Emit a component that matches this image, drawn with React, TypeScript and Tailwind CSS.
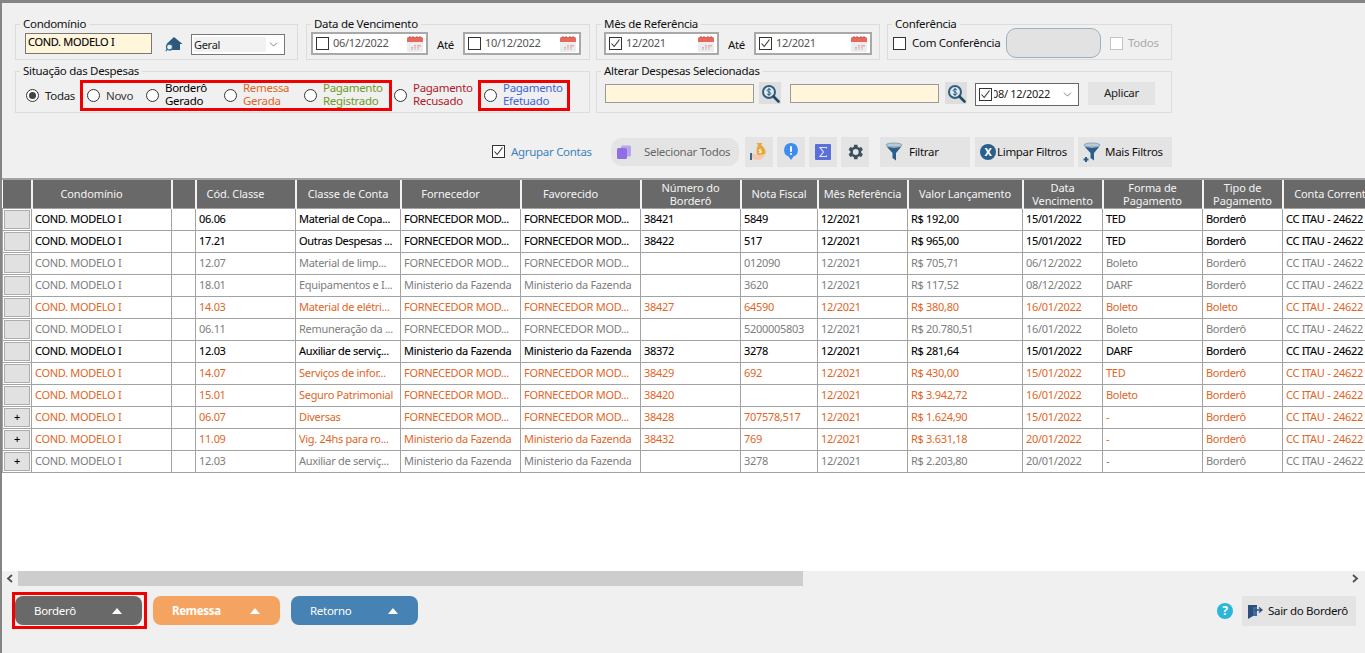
import React from "react";
import { ChevronDown } from "lucide-react";

type Tone = "k" | "g" | "o";
const FN = "FORNECEDOR MOD...";
const MF = "Ministerio da Fazenda";
const rows: { t: Tone; p?: boolean; c: string[] }[] = [
  { t: "k", c: ["06.06", "Material de Copa...", FN, FN, "38421", "5849", "R$ 192,00", "15/01/2022", "TED", "Borderô"] },
  { t: "k", c: ["17.21", "Outras Despesas ...", FN, FN, "38422", "517", "R$ 965,00", "15/01/2022", "TED", "Borderô"] },
  { t: "g", c: ["12.07", "Material de limp...", FN, FN, "", "012090", "R$ 705,71", "06/12/2022", "Boleto", "Borderô"] },
  { t: "g", c: ["18.01", "Equipamentos e I...", MF, MF, "", "3620", "R$ 117,52", "08/12/2022", "DARF", "Borderô"] },
  { t: "o", c: ["14.03", "Material de elétri...", FN, FN, "38427", "64590", "R$ 380,80", "16/01/2022", "Boleto", "Boleto"] },
  { t: "g", c: ["06.11", "Remuneração da ...", FN, FN, "", "5200005803", "R$ 20.780,51", "16/01/2022", "Boleto", "Borderô"] },
  { t: "k", c: ["12.03", "Auxiliar de serviç...", MF, MF, "38372", "3278", "R$ 281,64", "15/01/2022", "DARF", "Borderô"] },
  { t: "o", c: ["14.07", "Serviços de infor...", FN, FN, "38429", "692", "R$ 430,00", "15/01/2022", "TED", "Borderô"] },
  { t: "o", c: ["15.01", "Seguro Patrimonial", FN, FN, "38420", "", "R$ 3.942,72", "16/01/2022", "Boleto", "Borderô"] },
  { t: "o", p: true, c: ["06.07", "Diversas", FN, FN, "38428", "707578,517", "R$ 1.624,90", "15/01/2022", "-", "Borderô"] },
  { t: "o", p: true, c: ["11.09", "Vig. 24hs para ro...", MF, MF, "38432", "769", "R$ 3.631,18", "20/01/2022", "-", "Borderô"] },
  { t: "g", p: true, c: ["12.03", "Auxiliar de serviç...", MF, MF, "", "3278", "R$ 2.203,80", "20/01/2022", "-", "Borderô"] },
];
const toneClass: Record<Tone, string> = {
  k: "text-black [-webkit-text-stroke:0.1px_black]",
  g: "text-[#7d7d7d]",
  o: "text-[#e0661f]",
};
const widths = [29, 140, 24, 100, 105, 120, 120, 100, 77, 90, 115, 80, 100, 80, 100];
const headers: [string, string?, boolean?][] = [
  [""], ["Condomínio", undefined, true], [""], ["Cód. Classe", undefined, true], ["Classe de Conta"], ["Fornecedor", undefined, true], ["Favorecido", undefined, true],
  ["Número do", "Borderô"], ["Nota Fiscal"], ["Mês Referência"], ["Valor Lançamento"], ["Data", "Vencimento"],
  ["Forma de", "Pagamento"], ["Tipo de", "Pagamento"], ["Conta Corrente"],
];

function Group({ title, className, inner, children }: { title: string; className: string; inner: string; children: React.ReactNode }) {
  return (
    <fieldset className={`border border-[#dcdcdc] min-w-0 shrink-0 ${className}`}>
      <legend className="ml-[4px] px-[3px] text-[11.5px] leading-[12px] text-[#111]">{title}</legend>
      <div className={`flex items-center ${inner}`}>{children}</div>
    </fieldset>
  );
}

function Calendar() {
  return (
    <svg width="18" height="18" viewBox="0 0 18 18" className="shrink-0">
      <rect x="1" y="2" width="16" height="15" rx="1.5" fill="#e9eef0" />
      <path d="M1 3.5A1.5 1.5 0 0 1 2.5 2h13A1.5 1.5 0 0 1 17 3.5V7H1z" fill="#e8695c" />
      <path d="M4 1v2M7 1v2M11 1v2M14 1v2" stroke="#b9534a" strokeWidth="1" />
      <path d="M6 12v3M9 10v5M12 10v5M14 10v2" stroke="#ee8f84" strokeWidth="1.4" strokeDasharray="1.4 .8" />
    </svg>
  );
}

function Check({ on, disabled }: { on?: boolean; disabled?: boolean }) {
  return (
    <span className={`w-[13px] h-[13px] border flex items-center justify-center shrink-0 bg-white ${disabled ? "border-[#c4c4c4]" : "border-[#333]"}`}>
      {on && (
        <svg width="11" height="11" viewBox="0 0 11 11">
          <path d="M1.5 5.5 4.2 8.5 9.5 1.5" fill="none" stroke="#333" strokeWidth="1.1" />
        </svg>
      )}
    </span>
  );
}

function DateBox({ on, value, w }: { on?: boolean; value: string; w: string }) {
  return (
    <div className={`h-[23px] ${w} bg-white border-2 border-[#a9a9a9] flex items-center pl-[3px] pr-[2px] text-[11px] text-[#555]`}>
      <Check on={on} />
      <span className="ml-[4px] flex-1">{value}</span>
      <Calendar />
    </div>
  );
}

function Radio({ on }: { on?: boolean }) {
  return (
    <span className="w-[13px] h-[13px] rounded-full border border-[#333] bg-white flex items-center justify-center shrink-0">
      {on && <span className="w-[7px] h-[7px] rounded-full bg-[#444]" />}
    </span>
  );
}

function RadioItem({ a, b, color, w, on }: { a: string; b?: string; color: string; w: string; on?: boolean }) {
  return (
    <div className={`flex items-center ${w} gap-[6px] shrink-0`}>
      <Radio on={on} />
      <span className={`text-[11.5px] leading-[13px] whitespace-nowrap ${color} ${b ? "mb-[4px]" : ""}`}>
        {a}
        {b && <br />}
        {b}
      </span>
    </div>
  );
}

function MoneyLens() {
  return (
    <span className="w-[22px] h-[22px] bg-[#dedede] flex items-center justify-center shrink-0">
      <svg width="19" height="19" viewBox="0 0 19 19">
        <circle cx="8" cy="8" r="6" fill="#dfe8ee" stroke="#2f5f7f" strokeWidth="2" />
        <path d="M12.5 12.5 17.5 17.5" stroke="#244a63" strokeWidth="2.6" strokeLinecap="round" />
        <path d="M10 6c-.6-1-3.6-1.300-3.800.4C6 8 10 7.800 9.900 9.600 9.700 11 6.600 10.900 6 9.800M8 3.800v8.400" fill="none" stroke="#2f5f7f" strokeWidth="1" />
      </svg>
    </span>
  );
}

function IconTile({ children }: { children: React.ReactNode }) {
  return <span className="w-[28px] h-[30px] bg-[#e4e4e4] flex items-center justify-center">{children}</span>;
}

function Funnel({ plus }: { plus?: boolean }) {
  return (
    <svg width="20" height="20" viewBox="0 0 20 20" className="shrink-0">
      <ellipse cx="9" cy="3" rx="8" ry="2" fill="#b9cbd8" stroke="#7b97ab" strokeWidth=".8" />
      <path d="M1.500 4.500c3 1.500 12 1.500 15 0L11 11v7.500L7.500 16v-5z" fill="#2a5f8d" />
      {plus && <path d="M3 15v5M.5 17.500h5" stroke="#2a5f8d" strokeWidth="2" />}
    </svg>
  );
}

function ActionBtn({ w, children }: { w: string; children: React.ReactNode }) {
  return <button className={`h-[30px] ${w} bg-[#e4e4e4] flex items-center text-[11.5px] text-[#111]`}>{children}</button>;
}

function Pill({ label, color, bold }: { label: string; color: string; bold?: boolean }) {
  return (
    <button className={`w-[127px] h-[29px] rounded-[8px] ${color} flex items-center justify-between pl-[19px] pr-[20px] text-[11.5px] text-white ${bold ? "font-bold" : ""}`}>
      <span>{label}</span>
      <svg width="10" height="6" viewBox="0 0 10 6"><path d="M5 0 10 6H0z" fill="#fff" /></svg>
    </button>
  );
}

export default function App() {
  return (
    <div className="w-[1365px] h-[653px] overflow-hidden bg-[#f0f0f0] border-l-2 border-t-[3px] border-[#858585] flex flex-col tracking-[-0.3px] font-['Noto_Sans','Open_Sans',sans-serif]">
      {/* filter panel */}
      <div className="h-[110px] pl-[13px] pr-[193px] pt-[15px] flex flex-col shrink-0">
        <div className="flex h-[42px] shrink-0">
          <Group title="Condomínio" className="w-[283px]" inner="pl-[9px] items-start">
            <div className="h-[21px] w-[127px] mt-[3px] bg-[#fff6dc] border border-[#777] px-[2px] text-[11px] leading-[15px] text-black [-webkit-text-stroke:0.1px_black] shrink-0">COND. MODELO I</div>
            <svg width="18" height="16" viewBox="0 0 18 16" className="ml-[13px] mt-[6px] shrink-0">
              <path d="M9 1 1.500 8H4v6h11V8h2.500z" fill="#2f5878" />
              <circle cx="4.500" cy="11" r="3" fill="#f0f0f0" stroke="#2f6f9a" strokeWidth="1.300" />
              <path d="M2.500 13 .8 15" stroke="#2f6f9a" strokeWidth="1.300" />
            </svg>
            <div className="h-[21px] w-[94px] ml-[8px] mt-[4px] bg-white border border-[#777] flex items-center pl-[2px] pr-[4px] text-[11px] text-[#222] shrink-0">
              <span className="w-[72px] bg-[#f2f2f2] leading-[15px]">Geral</span>
              <ChevronDown size={13} strokeWidth={1.2} className="ml-auto text-[#444]" />
            </div>
          </Group>
          <Group title="Data de Vencimento" className="w-[284px] ml-[8px]" inner="pl-[4px] mt-[2px]">
            <DateBox w="w-[117px]" value="06/12/2022" />
            <span className="w-[35px] text-center text-[11.5px] text-[#111] pt-[3px]">Até</span>
            <DateBox w="w-[118px]" value="10/12/2022" />
          </Group>
          <Group title="Mês de Referência" className="w-[284px] ml-[6px]" inner="pl-[7px] mt-[2px]">
            <DateBox on w="w-[115px]" value="12/2021" />
            <span className="w-[35px] text-center text-[11.5px] text-[#111] pt-[3px]">Até</span>
            <DateBox on w="w-[118px]" value="12/2021" />
          </Group>
          <Group title="Conferência" className="w-[285px] ml-[7px]" inner="pl-[5px] -mt-[2px] h-[30px]">
            <Check />
            <span className="ml-[6px] w-[87px] text-[11.5px] text-[#111] whitespace-nowrap">Com Conferência</span>
            <span className="ml-[7px] w-[95px] h-[30px] rounded-[10px] bg-[#e2e2e2] border border-[#9fb0bd]" />
            <span className="ml-[9px]"><Check disabled /></span>
            <span className="ml-[5px] text-[11.5px] text-[#aaa]">Todos</span>
          </Group>
        </div>
        <div className="flex justify-between h-[48px] mt-[5px] shrink-0">
          <Group title="Situação das Despesas" className="w-[575px]" inner="pl-[10px] h-[31px] mt-[3px]">
            <RadioItem on w="w-[54px]" a="Todas" color="text-[#222]" />
            <div className="border-[3px] border-[#f00000] h-[31px] w-[312px] flex items-center pl-[4px] shrink-0">
              <RadioItem w="w-[59px]" a="Novo" color="text-[#3a3a3a]" />
              <RadioItem w="w-[78px]" a="Borderô" b="Gerado" color="text-black" />
              <RadioItem w="w-[80px]" a="Remessa" b="Gerada" color="text-[#e0661f]" />
              <RadioItem w="w-[85px]" a="Pagamento" b="Registrado" color="text-[#6f9a1f]" />
            </div>
            <div className="w-[86px] pl-[2px] shrink-0">
              <RadioItem w="w-[84px]" a="Pagamento" b="Recusado" color="text-[#b3172c]" />
            </div>
            <div className="border-[3px] border-[#f00000] h-[31px] w-[92px] flex items-center pl-[3px] shrink-0">
              <RadioItem w="w-[84px]" a="Pagamento" b="Efetuado" color="text-[#3f63dd]" />
            </div>
          </Group>
          <Group title="Alterar Despesas Selecionadas" className="w-[576px]" inner="pl-[8px] h-[24px] mt-[4px]">
            <span className="w-[149px] h-[19px] bg-[#fff6dc] border border-[#9a9a9a]" />
            <span className="ml-[5px]"><MoneyLens /></span>
            <span className="ml-[9px] w-[149px] h-[19px] bg-[#fff6dc] border border-[#9a9a9a]" />
            <span className="ml-[6px]"><MoneyLens /></span>
            <div className="ml-[8px] w-[104px] h-[23px] mt-[2px] bg-white border border-[#666] flex items-center pl-[3px] pr-[4px] text-[11px] text-[#222]">
              <Check on />
              <span className="w-[4px] overflow-hidden flex justify-end ml-[2px]"><span>0</span></span>
              <span className="whitespace-nowrap">8/ 12/2022</span>
              <ChevronDown size={13} strokeWidth={1.2} className="ml-auto text-[#444] shrink-0" />
            </div>
            <button className="ml-[9px] w-[67px] h-[23px] bg-[#e4e4e4] text-[11.5px] text-[#222]">Aplicar</button>
          </Group>
        </div>
      </div>

      {/* toolbar */}
      <div className="h-[33px] shrink-0 flex items-center justify-end pr-[193px] mt-[22px] mb-[10px]">
        <Check on />
        <span className="ml-[6px] w-[79px] whitespace-nowrap text-[11.5px] text-[#3d82b8]">Agrupar Contas</span>
        <button className="ml-[21px] w-[128px] h-[28px] rounded-[11px] bg-[#e4e4e4] flex items-center pl-[5px] text-[11.5px] text-[#666]">
          <svg width="16" height="16" viewBox="0 0 16 16" className="shrink-0">
            <rect x="5" y="1.500" width="10" height="11" rx="1.500" fill="#b7a7e8" />
            <rect x="1" y="4" width="10" height="11" rx="1.500" fill="#8f6ee8" />
          </svg>
          <span className="ml-[12px]">Selecionar Todos</span>
        </button>
        <span className="ml-[6px]"><IconTile>
          <svg width="20" height="20" viewBox="0 0 20 20">
            <path d="M9 3 7.500 1h6L12 3c3 2 5 5 4.500 8-.4 2-3 3-5 3s-4-1-4-4C7.500 7 8 5 9 3z" fill="#e9a83c" />
            <path d="M3 12c3-1 5 1 7 1s4-1 6-1c-1 4-4 6-7 6-2 0-4-1-6-2z" fill="#f6c9ae" />
            <rect x="1" y="11" width="2" height="7" fill="#3b6a8c" />
            <text x="9.500" y="10.500" fontSize="6" fill="#fff" fontFamily="Noto Sans" fontWeight="700">$</text>
          </svg>
        </IconTile></span>
        <span className="ml-[4px]"><IconTile>
          <svg width="16" height="20" viewBox="0 0 16 20">
            <path d="M8 1a7 7 0 0 1 2.500 13.500L8 18l-2.500-3.500A7 7 0 0 1 8 1z" fill="#3f8cf0" />
            <rect x="7" y="4" width="2" height="6" rx="1" fill="#fff" />
            <circle cx="8" cy="12" r="1.100" fill="#fff" />
          </svg>
        </IconTile></span>
        <span className="ml-[4px]"><IconTile>
          <svg width="16" height="16" viewBox="0 0 16 16">
            <rect width="16" height="16" rx="1" fill="#5a6fd8" />
            <path d="M11.500 4.500V3.500H5L8.500 8 5 12.500h6.500v-1" fill="none" stroke="#dfe4fb" strokeWidth="1.200" />
          </svg>
        </IconTile></span>
        <span className="ml-[4px]"><IconTile>
          <svg width="20" height="20" viewBox="0 0 24 24">
            <path fillRule="evenodd" clipRule="evenodd" d="M19.400 13a7.600 7.600 0 0 0 0-2l2.100-1.600-2-3.500-2.500 1a7.500 7.500 0 0 0-1.700-1L14.900 3.200h-4l-.4 2.700a7.500 7.500 0 0 0-1.700 1l-2.500-1-2 3.500L6.400 11a7.600 7.600 0 0 0 0 2l-2.100 1.600 2 3.500 2.500-1a7.500 7.500 0 0 0 1.700 1l.4 2.700h4l.4-2.700a7.500 7.500 0 0 0 1.700-1l2.500 1 2-3.500zM12.900 15.500a3.500 3.500 0 1 1 0-7 3.500 3.500 0 0 1 0 7z" fill="#3c4f5c" />
          </svg>
        </IconTile></span>
        <span className="ml-[11px]"><ActionBtn w="w-[90px] pl-[5px]"><Funnel /><span className="ml-[4px]">Filtrar</span></ActionBtn></span>
        <span className="ml-[5px]">
          <ActionBtn w="w-[99px] pl-[5px]">
            <span className="w-[16px] h-[16px] rounded-full bg-[#2a5f8d] text-white text-[11px] leading-[16px] font-bold text-center shrink-0">X</span>
            <span className="ml-[1px] whitespace-nowrap">Limpar Filtros</span>
          </ActionBtn>
        </span>
        <span className="ml-[4px]"><ActionBtn w="w-[94px] pl-[5px]"><Funnel plus /><span className="ml-[2px] whitespace-nowrap">Mais Filtros</span></ActionBtn></span>
      </div>

      {/* grid */}
      <div className="h-[393px] shrink-0 bg-white border-t-2 border-[#a3a3a3] overflow-hidden">
        <table className="table-fixed border-collapse text-[11px]" style={{ width: widths.reduce((a, b) => a + b, 0) }}>
          <colgroup>
            {widths.map((w, i) => <col key={i} style={{ width: w }} />)}
          </colgroup>
          <thead>
            <tr className="h-[28px] bg-[#696969]">
              {headers.map(([a, b, shifted], i) => (
                <th key={i} className={`p-0 font-normal leading-[13px] text-center border-l-2 border-[#f2f2f2] first:border-l-0 whitespace-nowrap overflow-hidden text-[11px] tracking-[-0.1px] text-[#f4f4f4] align-middle ${shifted ? "pr-[20px]" : ""}`}>
                  {a}
                  {b && <br />}
                  {b}
                </th>
              ))}
            </tr>
          </thead>
          <tbody>
            {rows.map((r, i) => (
              <tr key={i} className={`h-[22px] ${toneClass[r.t]}`}>
                <td className="p-0 border border-[#a3a3a3]">
                  <span className="block mx-[1px] h-[19px] bg-[#e1e1e1] border border-[#adadad] text-black text-[11px] leading-[16px] font-medium text-center">{r.p ? "+" : ""}</span>
                </td>
                <td className="p-0 pl-[3px] border border-[#a3a3a3] whitespace-nowrap overflow-hidden">COND. MODELO I</td>
                <td className="p-0 border border-[#a3a3a3]" />
                {r.c.slice(0, 6).map((v, j) => (
                  <td key={j} className="p-0 pl-[3px] border border-[#a3a3a3] whitespace-nowrap overflow-hidden">{v}</td>
                ))}
                <td className="p-0 pl-[3px] border border-[#a3a3a3]">12/2021</td>
                {r.c.slice(6).map((v, j) => (
                  <td key={j} className="p-0 pl-[3px] border border-[#a3a3a3] whitespace-nowrap overflow-hidden">{v}</td>
                ))}
                <td className="p-0 pl-[3px] border-y border-l border-[#a3a3a3] whitespace-nowrap overflow-hidden">CC ITAU - 24622</td>
              </tr>
            ))}
          </tbody>
        </table>
      </div>

      {/* scrollbar */}
      <div className="h-[15px] shrink-0 flex items-center">
        <span className="w-[16px] flex justify-center">
          <svg width="8" height="9" viewBox="0 0 8 9"><path d="M6 1 2 4.500 6 8" fill="none" stroke="#505050" strokeWidth="1.800" /></svg>
        </span>
        <span className="w-[785px] h-[15px] bg-[#cdcdcd]" />
        <span className="ml-auto w-[16px] mr-[2px] flex justify-center">
          <svg width="8" height="9" viewBox="0 0 8 9"><path d="M2 1 6 4.500 2 8" fill="none" stroke="#505050" strokeWidth="1.800" /></svg>
        </span>
      </div>

      {/* footer */}
      <div className="flex-1 flex items-start pl-[10px] pr-[9px] pt-[6px] gap-[6px]">
        <div className="border-[3px] border-[#f00000] py-[1px] pr-[2px]"><Pill label="Borderô" color="bg-[#696969]" /></div>
        <div className="mt-[4px] flex gap-[11px]">
          <Pill label="Remessa" color="bg-[#f4a460]" bold />
          <Pill label="Retorno" color="bg-[#4682b4]" />
        </div>
        <div className="ml-auto mt-[4px] flex items-center gap-[9px]">
          <span className="w-[16px] h-[16px] rounded-full bg-[#29b6d8] text-white text-[12px] leading-[16px] font-bold text-center">?</span>
          <button className="w-[114px] h-[30px] bg-[#e4e4e4] flex items-center pl-[5px] text-[11.5px] text-[#111]">
            <svg width="17" height="17" viewBox="0 0 17 17" className="shrink-0">
              <path d="M1 2h9v2H6v9l-5 3z" fill="#2a4f7d" />
              <path d="M6 4h4v9H6z" fill="#3f6a9b" />
              <path d="M8 7h6M12 4.500 15 7l-3 2.500" fill="none" stroke="#2a4f7d" strokeWidth="1.300" />
            </svg>
            <span className="ml-[4px] whitespace-nowrap">Sair do Borderô</span>
          </button>
        </div>
      </div>
    </div>
  );
}
